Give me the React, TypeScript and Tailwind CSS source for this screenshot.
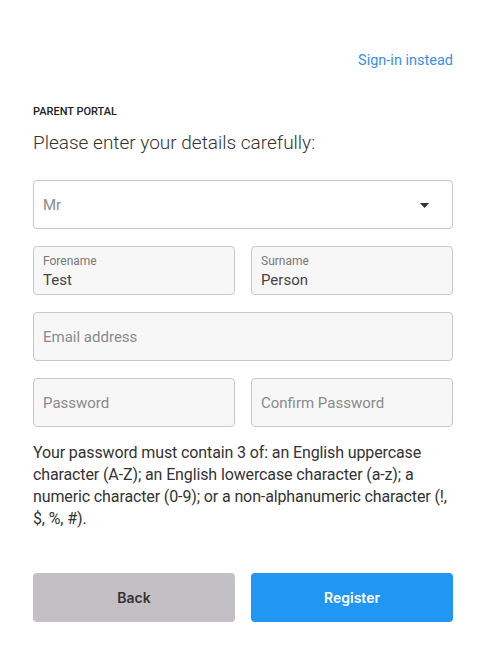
export default function App() {
  return (
    <div className="min-h-screen bg-white font-['Roboto',sans-serif]">
      <div className="ml-[33px] w-[420px] pt-[51px]">
        <div className="flex justify-end">
          <a className="text-[14.5px] leading-[20px] text-[#3a8ee6]">Sign-in instead</a>
        </div>

        <div className="mt-[33px] text-[11px] font-medium leading-[16px] text-[#222]">PARENT PORTAL</div>
        <h1 className="mt-[10px] text-[19px] font-light leading-[26px] text-[#333]">
          Please enter your details carefully:
        </h1>

        <div className="mt-[24px] flex h-[49px] items-center justify-between rounded border border-[#c8c8c8] bg-white pl-[9px] pr-[23px] pt-[2px]">
          <span className="text-[15px] text-[#8a8a8a]">Mr</span>
          <svg width="9" height="5" viewBox="0 0 9 5">
            <path d="M0 0h9L4.5 5z" fill="#333" />
          </svg>
        </div>

        <div className="mt-[17px] grid grid-cols-2 gap-4">
          <div className="flex h-[49px] flex-col rounded border border-[#c8c8c8] bg-[#f7f7f7] pl-[9px] pt-[7px]">
            <span className="text-[12px] leading-[14px] text-[#777]">Forename</span>
            <span className="mt-[2px] text-[15px] leading-[20px] text-[#444]">Test</span>
          </div>
          <div className="flex h-[49px] flex-col rounded border border-[#c8c8c8] bg-[#f7f7f7] pl-[9px] pt-[7px]">
            <span className="text-[12px] leading-[14px] text-[#777]">Surname</span>
            <span className="mt-[2px] text-[15px] leading-[20px] text-[#444]">Person</span>
          </div>
        </div>

        <div className="mt-[17px] flex h-[49px] items-center rounded border border-[#c8c8c8] bg-[#f7f7f7] pl-[9px] pt-[1px]">
          <span className="text-[15px] text-[#8a8a8a]">Email address</span>
        </div>

        <div className="mt-[17px] grid grid-cols-2 gap-4">
          <div className="flex h-[49px] items-center rounded border border-[#c8c8c8] bg-[#f7f7f7] pl-[9px] pt-[1px]">
            <span className="text-[15px] text-[#8a8a8a]">Password</span>
          </div>
          <div className="flex h-[49px] items-center rounded border border-[#c8c8c8] bg-[#f7f7f7] pl-[9px] pt-[1px]">
            <span className="text-[15px] text-[#8a8a8a]">Confirm Password</span>
          </div>
        </div>

        <p className="mt-[15px] text-[16px] leading-[22px] tracking-[-0.12px] text-[#333]">
          Your password must contain 3 of: an English uppercase character (A-Z); an English lowercase character (a-z); a
          numeric character (0-9); or a non-alphanumeric character (!, $, %, #).
        </p>

        <div className="mt-[43px] grid grid-cols-2 gap-4">
          <button className="h-[49px] rounded bg-[#c2c0c4] text-[14px] font-semibold text-[#333] font-['Inter',sans-serif]">
            Back
          </button>
          <button className="h-[49px] rounded bg-[#2196f3] text-[14px] font-semibold text-white font-['Inter',sans-serif]">
            Register
          </button>
        </div>
      </div>
    </div>
  );
}
